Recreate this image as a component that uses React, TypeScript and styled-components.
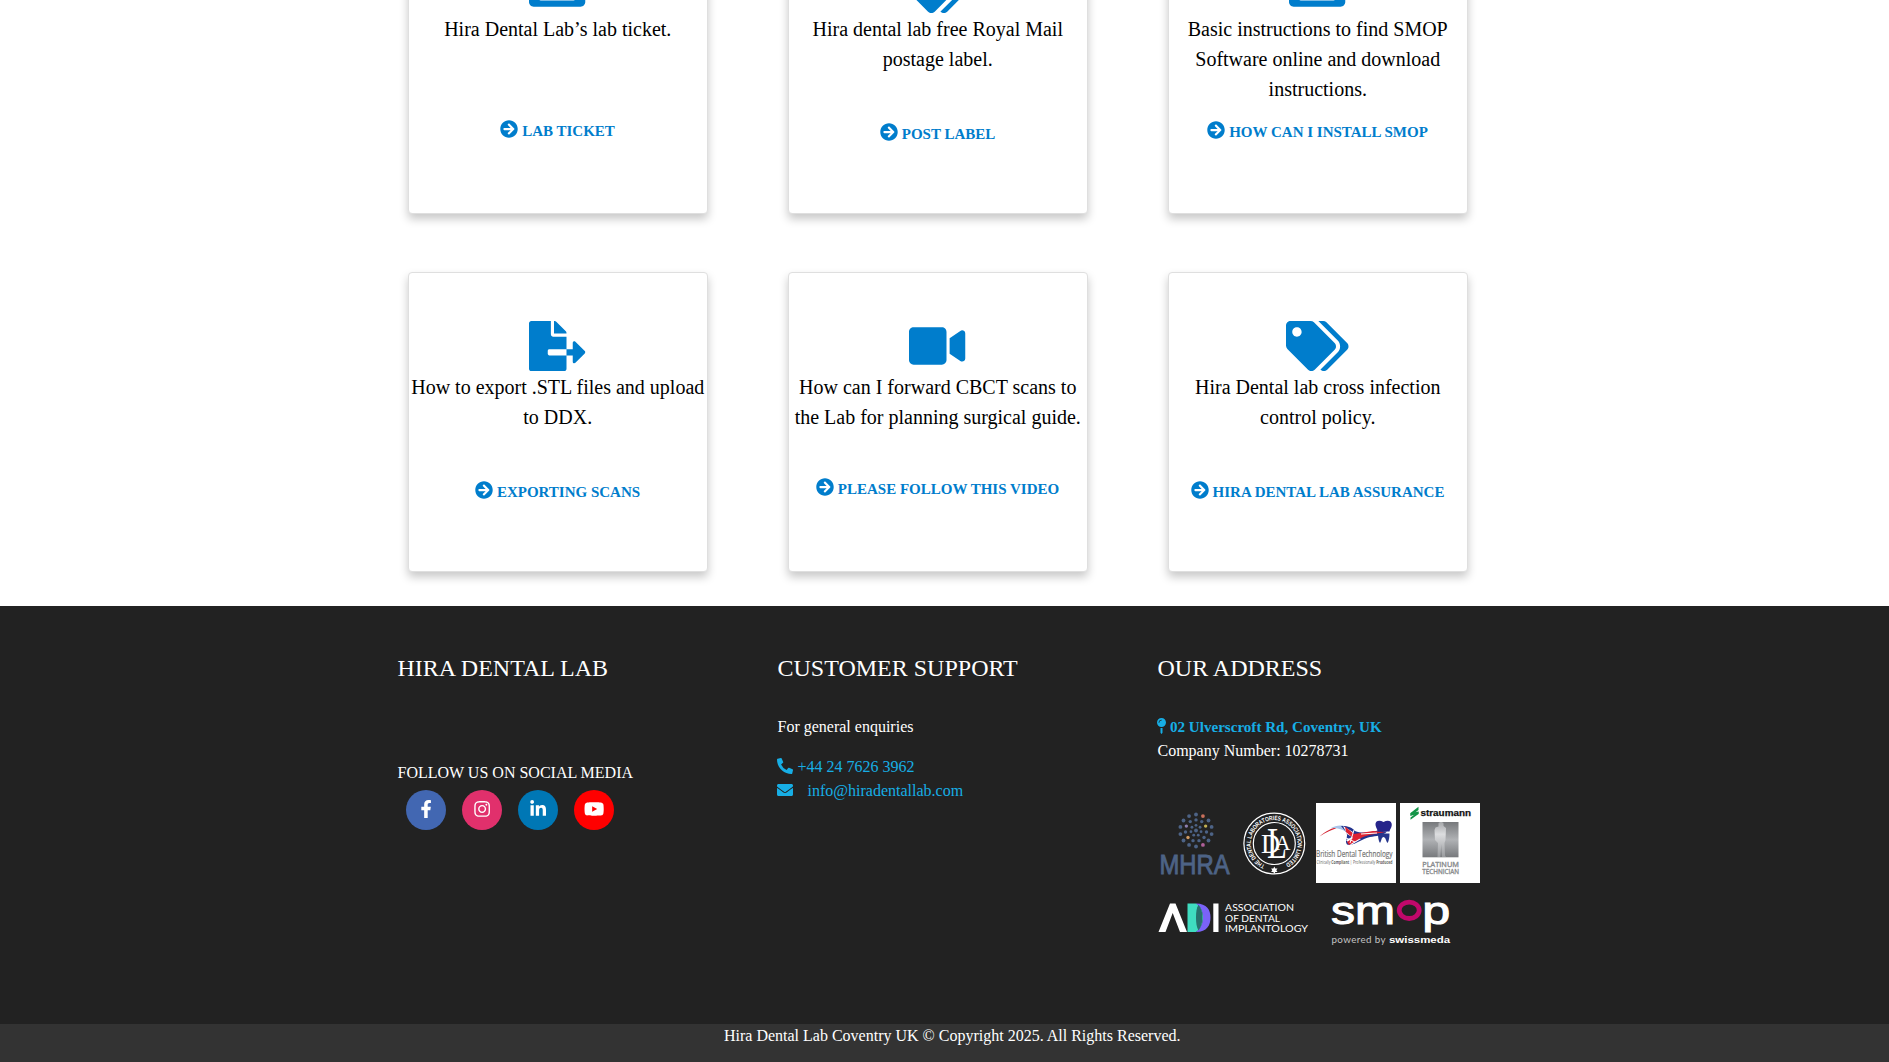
import React from 'react';
import styled, { createGlobalStyle } from 'styled-components';
import {
  FaArrowCircleRight,
  FaEnvelope,
  FaFacebookF,
  FaFileExport,
  FaInstagram,
  FaLinkedinIn,
  FaMapPin,
  FaPhoneAlt,
  FaTags,
  FaTicketAlt,
  FaVideo,
  FaYoutube,
} from 'react-icons/fa';

const GlobalStyle = createGlobalStyle`
  * { box-sizing: border-box; }
  html, body { margin: 0; padding: 0; background: #fff; }
  body {
    height: 1062px;
    overflow: hidden;
    font-family: "Liberation Serif", "Times New Roman", serif;
    font-size: 16px;
    line-height: 24px;
    color: #000;
  }
`;

const Page = styled.div`
  display: flex;
  flex-direction: column;
  height: 1062px;
  overflow: hidden;
`;

const Cards = styled.main`
  flex: none;
  height: 606px;
  display: grid;
  grid-template-columns: repeat(3, 300px);
  grid-auto-rows: 300px;
  gap: 58px 80px;
  align-content: end;
  padding: 0 0 34px 408px;
`;

const Card = styled.article`
  display: flex;
  flex-direction: column;
  align-items: center;
  padding-top: 48px;
  border: 1px solid #dfdfdf;
  border-radius: 4px;
  background: #fff;
  box-shadow: 0 5px 10px rgba(0, 0, 0, 0.22);
  text-align: center;
`;

const CardIcon = styled.div<{ $width: number }>`
  display: flex;
  height: 50px;
  margin-right: 1px;
  color: #007dcc;
  svg { width: ${(p) => p.$width}px; height: 50px; }
`;

const CardText = styled.p`
  margin: 1px 0 0;
  width: 298px;
  height: 90px;
  padding: 0 2px 0 1.5px;
  font-size: 20px;
  line-height: 30px;
`;

const CardLink = styled.a<{ $gap: number }>`
  display: flex;
  align-items: flex-start;
  gap: 4px;
  margin: ${(p) => p.$gap}px 1px 0 0;
  color: #007dcc;
  font-size: 15px;
  font-weight: 700;
  line-height: 22px;
  white-space: nowrap;
  svg { width: 18px; height: 18px; margin-top: 0.3px; }
`;

const Footer = styled.footer`
  flex: none;
  height: 418px;
  display: grid;
  grid-template-columns: 380px 380px 340px;
  padding: 48px 0 0 397.5px;
  background: #222;
  color: #fff;
`;

const Column = styled.section`
  display: flex;
  flex-direction: column;
  align-items: flex-start;
`;

const Heading = styled.h4`
  margin: 0;
  font-size: 24px;
  font-weight: 400;
  line-height: 29px;
`;

const Line = styled.p<{ $top: number }>`
  margin: ${(p) => p.$top}px 0 0;
  white-space: nowrap;
`;

const ContactLink = styled.a<{ $top: number; $gap: number; $icon: number; $bold?: boolean }>`
  display: flex;
  gap: ${(p) => p.$gap}px;
  margin: ${(p) => p.$top}px 0 0 -0.5px;
  color: #17aee5;
  font-size: ${(p) => (p.$bold ? 15.08 : 16)}px;
  font-weight: ${(p) => (p.$bold ? 700 : 400)};
  white-space: nowrap;
  svg { width: ${(p) => p.$icon}px; height: 16px; margin-top: 3px; }
`;

const Socials = styled.div`
  display: flex;
  gap: 16px;
  margin: 5px 0 0 8.5px;
`;

const Social = styled.a<{ $color: string }>`
  display: flex;
  align-items: center;
  justify-content: center;
  width: 40px;
  height: 40px;
  padding-bottom: 3px;
  border-radius: 50%;
  background: ${(p) => p.$color};
  color: #fff;
  svg { width: 20.25px; height: 18px; }
`;

const LogoRow = styled.div<{ $top: number; $gap: number }>`
  display: flex;
  gap: ${(p) => p.$gap}px;
  margin: ${(p) => p.$top}px 0 0 -0.5px;
  svg { flex: none; display: block; overflow: visible; }
`;

const Copyright = styled.div`
  flex: none;
  height: 38px;
  padding: 0 0 0 15.5px;
  background: #333;
  color: #fff;
  text-align: center;
`;

const cards = [
  { icon: <FaTicketAlt />, width: 56.25, text: 'Hira Dental Lab’s lab ticket.', link: 'LAB TICKET', gap: 16 },
  { icon: <FaTags />, width: 62.5, text: 'Hira dental lab free Royal Mail postage label.', link: 'POST LABEL', gap: 19 },
  {
    icon: <FaTicketAlt />,
    width: 56.25,
    text: 'Basic instructions to find SMOP Software online and download instructions.',
    link: 'HOW CAN I INSTALL SMOP',
    gap: 17,
  },
  { icon: <FaFileExport />, width: 56.25, text: 'How to export .STL files and upload to DDX.', link: 'EXPORTING SCANS', gap: 19 },
  {
    icon: <FaVideo />,
    width: 56.25,
    text: 'How can I forward CBCT scans to the Lab for planning surgical guide.',
    link: 'PLEASE FOLLOW THIS VIDEO',
    gap: 16,
  },
  { icon: <FaTags />, width: 62.5, text: 'Hira Dental lab cross infection control policy.', link: 'HIRA DENTAL LAB ASSURANCE', gap: 19 },
];

const socials = [
  { color: '#4267b2', icon: <FaFacebookF /> },
  { color: '#e1306c', icon: <FaInstagram /> },
  { color: '#0077b5', icon: <FaLinkedinIn /> },
  { color: '#ff0000', icon: <FaYoutube /> },
];

const sans = '"Liberation Sans", Arial, sans-serif';
const rounded = 'Lato, "Liberation Sans", sans-serif';
const narrow = '"Open Sans", "Liberation Sans", sans-serif';

const accents: Record<string, string> = {
  '3-1': '#c9705c',
  '2-2': '#c2b052',
  '3-6': '#b0609a',
  '2-9': '#8d7fb0',
  '2-7': '#d09a62',
};

// Concentric rings of dots: ring radius, number of dots, dot size.
const rings = [
  { r: 5.2, n: 7, dot: 1.4 },
  { r: 10.6, n: 11, dot: 1.7 },
  { r: 16, n: 14, dot: 1.9 },
];

const MhraLogo = () => (
  <svg width="76" height="80" viewBox="0 0 76 80">
    <circle cx="39" cy="27.5" r="1.9" fill="#4d6386" />
    {rings.map((ring, k) =>
      Array.from({ length: ring.n }, (_, i) => {
        const angle = ((i * 360) / ring.n - 90) * (Math.PI / 180);
        return (
          <circle
            key={`${k}-${i}`}
            cx={39 + ring.r * Math.cos(angle)}
            cy={27.5 + ring.r * Math.sin(angle)}
            r={ring.dot}
            fill={accents[`${k + 1}-${i}`] ?? '#4d6386'}
          />
        );
      }),
    )}
    <text x="2.5" y="70.5" fontFamily={sans} fontSize="27" fill="#4d6386" stroke="#4d6386" strokeWidth="0.9" textLength="70" lengthAdjust="spacingAndGlyphs">
      MHRA
    </text>
  </svg>
);

const DlaLogo = () => (
  <svg width="75" height="80" viewBox="0 0 75 80">
    <defs>
      <path id="dla-ring" d="M27.9 61.9A23.4 23.4 0 1 1 46.7 61.9" />
    </defs>
    <g fill="none" stroke="#fff">
      <circle cx="37.3" cy="40.5" r="30.4" strokeWidth="1.2" />
      <circle cx="37.3" cy="40.5" r="21" strokeWidth="1.2" />
    </g>
    <text fontFamily={sans} fontSize="6.3" fontWeight="700" fill="#fff">
      <textPath href="#dla-ring" textLength="125" lengthAdjust="spacingAndGlyphs">
        THE DENTAL LABORATORIES ASSOCIATION LIMITED
      </textPath>
    </text>
    <path d="M37.3 63.6l1 2 2.2-.1-1.2 1.8 1.2 1.8-2.2-.1-1 2-1-2-2.2.1 1.2-1.8-1.2-1.8 2.2.1z" fill="#fff" />
    <g fontFamily='"Liberation Serif", serif' fill="#fff">
      <text x="24" y="50" fontSize="27" textLength="19" lengthAdjust="spacingAndGlyphs">D</text>
      <text x="30" y="54.5" fontSize="45" textLength="20" lengthAdjust="spacingAndGlyphs">L</text>
      <text x="38" y="46.5" fontSize="22" textLength="15.5" lengthAdjust="spacingAndGlyphs">A</text>
    </g>
  </svg>
);

const BdtLogo = () => (
  <svg width="80" height="80" viewBox="0 0 80 80">
    <rect width="80" height="80" fill="#fff" />
    <path d="M3.5 33.5C10 28 16 24.5 23 24C17 26.5 10 29 3.5 33.5Z" fill="#d3202f" />
    <path d="M15 25C20 22 26 21.5 32 24L31 29C25 25.5 20 25 15 25Z" fill="#a8c4ea" />
    <path d="M25 23C30 22.5 37 24.5 39 28C46 31 55 29 62 27.5L71 28.5C67 33 60 33 54 34C46 35.5 39 43 31 41.5C28 38 33 33 30 29Z" fill="#22338d" />
    <path d="M27 23L37 29L36 34L31 31Z M30 37L38 33L45 36L35 42Z" fill="#fff" />
    <path d="M29 23.5L38 31L57 28L69 29C60 31 51 31.5 43 36L33 42L31 39L37 35L30 29Z" fill="#dd2231" />
    <path d="M30 35L39 39M38 27L34 40M45 31L61 30" stroke="#fff" strokeWidth="1" fill="none" />
    <path d="M59.5 22C59 18 63 16.5 67.5 19C72 16.5 76 18 75.8 22C75.5 25 74 26 73.5 28.5H61.5C61.5 26 60 25 59.5 22Z" fill="#26248a" />
    <path d="M62 30.5H73.5C73.5 34 73 38 71.5 40C70 38 69.5 34 67.5 34C65.5 34 65.5 38 64 40C62.5 38 62 34 62 30.5Z" fill="#26358d" />
    <text x="0" y="53.5" fontFamily={narrow} fontSize="9.4" fill="#737373" stroke="#737373" strokeWidth="0.2" textLength="76.5" lengthAdjust="spacingAndGlyphs">
      British Dental Technology
    </text>
    <text x="0.5" y="60.8" fontFamily={narrow} fontSize="4.6" fill="#666" textLength="76" lengthAdjust="spacingAndGlyphs">
      Clinically <tspan fontWeight="700">Compliant</tspan> | Professionally <tspan fontWeight="700">Produced</tspan>
    </text>
  </svg>
);

const StraumannLogo = () => (
  <svg width="80" height="80" viewBox="0 0 80 80">
    <defs>
      <linearGradient id="steel" x1="0" y1="0" x2="0" y2="1">
        <stop offset="0" stopColor="#77797c" />
        <stop offset="0.5" stopColor="#b0b2b5" />
        <stop offset="1" stopColor="#77797c" />
      </linearGradient>
      <linearGradient id="figure" x1="0" y1="0" x2="0" y2="1">
        <stop offset="0" stopColor="#a5a7aa" />
        <stop offset="0.35" stopColor="#dcdddf" />
        <stop offset="1" stopColor="#999b9e" />
      </linearGradient>
    </defs>
    <rect width="80" height="80" fill="#fff" />
    <path d="M10.5 10L18.5 3.8V7L10.5 13ZM10.5 14.5L18.5 8.5V11L10.5 16.8Z" fill="#129447" />
    <path d="M10.5 10L18.5 8.5V11L10.5 12.8Z" fill="#129447" />
    <text x="20.5" y="12.8" fontFamily={sans} fontWeight="700" fontSize="8.8" fill="#111" stroke="#111" strokeWidth="0.25" textLength="50.5" lengthAdjust="spacingAndGlyphs">
      straumann
    </text>
    <rect x="22.5" y="19" width="36" height="35.3" fill="url(#steel)" />
    <path d="M38.5 20.5C38.5 18.5 43.5 18.5 43.5 20.5V23L46 25L45.5 37L44.5 40L45 52.5L46 54H42L41.3 41L40.3 54H37.5L38 40L35 37L34.5 27L35.5 24.5L38.5 23.5Z" fill="url(#figure)" />
    <text x="22.3" y="63.9" fontFamily={narrow} fontSize="7.9" fill="#8b8d90" stroke="#8b8d90" strokeWidth="0.4" textLength="36.6" lengthAdjust="spacingAndGlyphs">
      PLATINUM
    </text>
    <text x="22.3" y="71" fontFamily={narrow} fontSize="6.6" fill="#8b8d90" stroke="#8b8d90" strokeWidth="0.35" textLength="36.6" lengthAdjust="spacingAndGlyphs">
      TECHNICIAN
    </text>
  </svg>
);

const AdiLogo = () => (
  <svg width="152" height="50" viewBox="0 0 152 50">
    <path d="M1.5 32L13 3.5H18.5L30 32H23L15.7 13L8.5 32Z" fill="#fff" />
    <path d="M30.500 3.500H39C44 6 46 12 46 17.500C46 23 44 29 39 32H30.500Z" fill="#3fdcc0" />
    <path d="M39 3.500C50 3.500 53.500 10 53.500 17.500C53.500 25 50 32 39 32C44 28 46 23 46 17.500C46 12 44 7 39 3.500Z" fill="#7a63f7" />
    <path d="M41.500 4.800C39.500 8 39 12 39 17.500C39 23 39.500 27 41.500 30.500C44 27 45.500 23 45.500 17.500C45.500 12 44 8 41.500 4.800Z" fill="#27706c" />
    <rect x="56.300" y="3.500" width="5.200" height="28.500" fill="#fff" />
    <g fontFamily={rounded} fontSize="10.300" fill="#fff">
      <text x="68" y="11.200" textLength="69" lengthAdjust="spacingAndGlyphs">ASSOCIATION</text>
      <text x="68" y="21.600" textLength="55" lengthAdjust="spacingAndGlyphs">OF DENTAL</text>
      <text x="68" y="32" textLength="83" lengthAdjust="spacingAndGlyphs">IMPLANTOLOGY</text>
    </g>
  </svg>
);

const SmopLogo = () => (
  <svg width="122" height="50" viewBox="0 0 122 50">
    <g fontFamily={sans} fontSize="38" fill="#fff" stroke="#fff" strokeWidth="1">
      <text x="0" y="23.600" textLength="64" lengthAdjust="spacingAndGlyphs">sm</text>
      <text x="91.300" y="23.600" textLength="28" lengthAdjust="spacingAndGlyphs">p</text>
    </g>
    <ellipse cx="78.200" cy="10.300" rx="10" ry="8.200" fill="none" stroke="#c1086b" strokeWidth="4.800" />
    <text x="0.500" y="42.500" fontFamily={rounded} fontSize="9.800" fill="#c4c4c4" textLength="54" lengthAdjust="spacing">
      powered by
    </text>
    <text x="58" y="42.500" fontFamily={sans} fontWeight="700" fontSize="9" fill="#fff" textLength="61" lengthAdjust="spacingAndGlyphs">
      swissmeda
    </text>
  </svg>
);

export default function App() {
  return (
    <Page>
      <GlobalStyle />
      <Cards>
        {cards.map((card) => (
          <Card key={card.link}>
            <CardIcon $width={card.width}>{card.icon}</CardIcon>
            <CardText>{card.text}</CardText>
            <CardLink $gap={card.gap}>
              <FaArrowCircleRight />
              {card.link}
            </CardLink>
          </Card>
        ))}
      </Cards>
      <Footer>
        <Column>
          <Heading>HIRA DENTAL LAB</Heading>
          <Line $top={78}>FOLLOW US ON SOCIAL MEDIA</Line>
          <Socials>
            {socials.map((s) => (
              <Social key={s.color} $color={s.color}>
                {s.icon}
              </Social>
            ))}
          </Socials>
        </Column>
        <Column>
          <Heading>CUSTOMER SUPPORT</Heading>
          <Line $top={32}>For general enquiries</Line>
          <ContactLink $top={16} $gap={4.5} $icon={16}>
            <FaPhoneAlt />
            +44 24 7626 3962
          </ContactLink>
          <ContactLink $top={0} $gap={14.5} $icon={16}>
            <FaEnvelope />
            info@hiradentallab.com
          </ContactLink>
        </Column>
        <Column>
          <Heading>OUR ADDRESS</Heading>
          <ContactLink $top={32} $gap={4} $icon={9} $bold>
            <FaMapPin />
            02 Ulverscroft Rd, Coventry, UK
          </ContactLink>
          <Line $top={0}>Company Number: 10278731</Line>
          <LogoRow $top={40} $gap={4}>
            <MhraLogo />
            <DlaLogo />
            <BdtLogo />
            <StraumannLogo />
          </LogoRow>
          <LogoRow $top={17} $gap={22}>
            <AdiLogo />
            <SmopLogo />
          </LogoRow>
        </Column>
      </Footer>
      <Copyright>Hira Dental Lab Coventry UK © Copyright 2025. All Rights Reserved.</Copyright>
    </Page>
  );
}
